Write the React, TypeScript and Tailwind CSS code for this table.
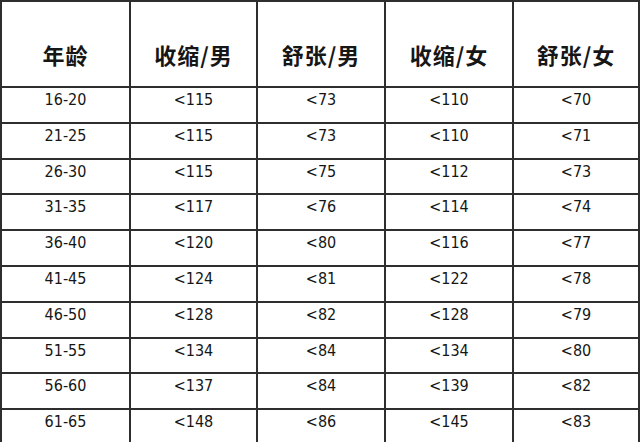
import React from "react";

const HEADERS = ["年龄", "收缩/男", "舒张/男", "收缩/女", "舒张/女"];

const ROWS: string[][] = [
  ["16-20", "<115", "<73", "<110", "<70"],
  ["21-25", "<115", "<73", "<110", "<71"],
  ["26-30", "<115", "<75", "<112", "<73"],
  ["31-35", "<117", "<76", "<114", "<74"],
  ["36-40", "<120", "<80", "<116", "<77"],
  ["41-45", "<124", "<81", "<122", "<78"],
  ["46-50", "<128", "<82", "<128", "<79"],
  ["51-55", "<134", "<84", "<134", "<80"],
  ["56-60", "<137", "<84", "<139", "<82"],
  ["61-65", "<148", "<86", "<145", "<83"],
];

export default function App() {
  return (
    <div className="w-[640px] h-[442px] overflow-hidden bg-white text-[#161616]">
      <div className="grid grid-cols-[129px_127px_128px_128px_1fr] border-t-2 border-l-2 border-[#2e2e2e]">
        {HEADERS.map((h) => (
          <div
            key={h}
            className="h-[86px] flex items-center justify-center pt-[20px] border-b-2 border-r-2 border-[#2e2e2e] text-[22px] font-bold tracking-[1px] font-['Noto_Sans_CJK_SC']"
          >
            {h}
          </div>
        ))}

        {ROWS.map((row, r) =>
          row.map((cell, c) => (
            <div
              key={`${r}-${c}`}
              className="h-[35.8px] text-center pt-[2px] leading-[20px] text-[16px] font-['DejaVu_Sans_Condensed'] border-b-2 border-r-2 border-[#2e2e2e]"
            >
              {cell}
            </div>
          ))
        )}
      </div>
    </div>
  );
}
